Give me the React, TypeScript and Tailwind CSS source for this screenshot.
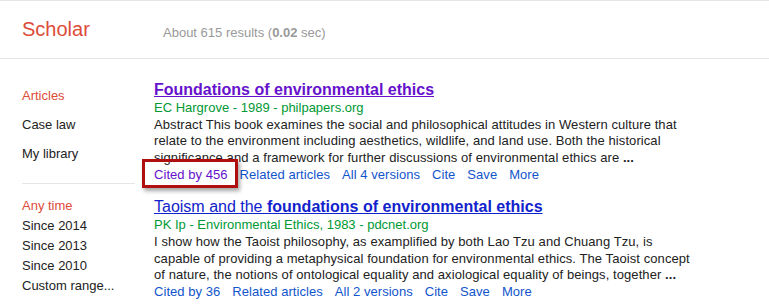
import React from "react";

const font = { fontFamily: '"Liberation Sans", Arial, sans-serif' };

function Links({ cited, versions, highlight }: { cited: string; versions: string; highlight?: boolean }) {
  return (
    <div className="flex items-center text-[13px] leading-[17px] text-[#1155cc] gap-[12px] tracking-[0.05px]">
      <span className="relative">
        <span className={highlight ? "text-[#6611cc]" : ""}>{cited}</span>
        {highlight && (
          <span className="absolute left-[-12px] right-[-10px] top-[-7px] bottom-[-5px] border-[3px] border-[#b00f0f] shadow-[2px_3px_4px_rgba(0,0,0,0.35)]" />
        )}
      </span>
      <span>Related articles</span>
      <span>{versions}</span>
      <span>Cite</span>
      <span>Save</span>
      <span>More</span>
    </div>
  );
}

export default function App() {
  return (
    <div className="w-[769px] h-[305px] bg-white overflow-hidden" style={font}>
      <div className="h-[59px] border-t border-b border-[#e5e5e5] flex items-center">
        <div className="w-[163px] pl-[22px] text-[20px] text-[#dd4b39] pb-[2px]">Scholar</div>
        <div className="text-[13px] text-[#999] pt-[6px]">
          About 615 results (<b>0.02</b> sec)
        </div>
      </div>
      <div className="flex">
        <div className="w-[154px] pl-[22px] pt-[29px] text-[13px] text-[#222] shrink-0">
          <div className="leading-[16px] text-[#dd4b39]">Articles</div>
          <div className="leading-[16px] mt-[13px]">Case law</div>
          <div className="leading-[16px] mt-[13px]">My library</div>
          <div className="w-[113px] border-t border-[#e5e5e5] mt-[21px]" />
          <div className="leading-[20px] mt-[12px] text-[#dd4b39]">Any time</div>
          <div className="leading-[20px]">Since 2014</div>
          <div className="leading-[20px]">Since 2013</div>
          <div className="leading-[20px]">Since 2010</div>
          <div className="leading-[20px]">Custom range...</div>
        </div>
        <div className="pt-[21px] flex flex-col">
          <div>
            <div className="text-[16px] leading-[20px] font-bold text-[#6611cc] underline">
              Foundations of environmental ethics
            </div>
            <div className="text-[13px] leading-[17px] text-[#009933] mt-[-1px]">EC Hargrove - 1989 - philpapers.org</div>
            <div className="text-[13px] leading-[16.4px] text-[#222] mt-[1px] w-[580px] tracking-[0.08px]">
              Abstract This book examines the social and philosophical attitudes in Western culture that
              <br />
              relate to the environment including aesthetics, wildlife, and land use. Both the historical
              <br />
              significance and a framework for further discussions of environmental ethics are <b>...</b>
            </div>
            <Links cited="Cited by 456" versions="All 4 versions" highlight />
          </div>
          <div className="mt-[14px]">
            <div className="text-[16px] leading-[20px] text-[#1122cc] underline">
              Taoism and the <b>foundations of environmental ethics</b>
            </div>
            <div className="text-[13px] leading-[17px] text-[#009933] mt-[-1px]">
              PK Ip - Environmental Ethics, 1983 - pdcnet.org
            </div>
            <div className="text-[13px] leading-[16.4px] text-[#222] mt-[1px] w-[580px] tracking-[0.08px]">
              I show how the Taoist philosophy, as examplified by both Lao Tzu and Chuang Tzu, is
              <br />
              capable of providing a metaphysical foundation for environmental ethics. The Taoist concept
              <br />
              of nature, the notions of ontological equality and axiological equality of beings, together <b>...</b>
            </div>
            <Links cited="Cited by 36" versions="All 2 versions" />
          </div>
        </div>
      </div>
    </div>
  );
}
